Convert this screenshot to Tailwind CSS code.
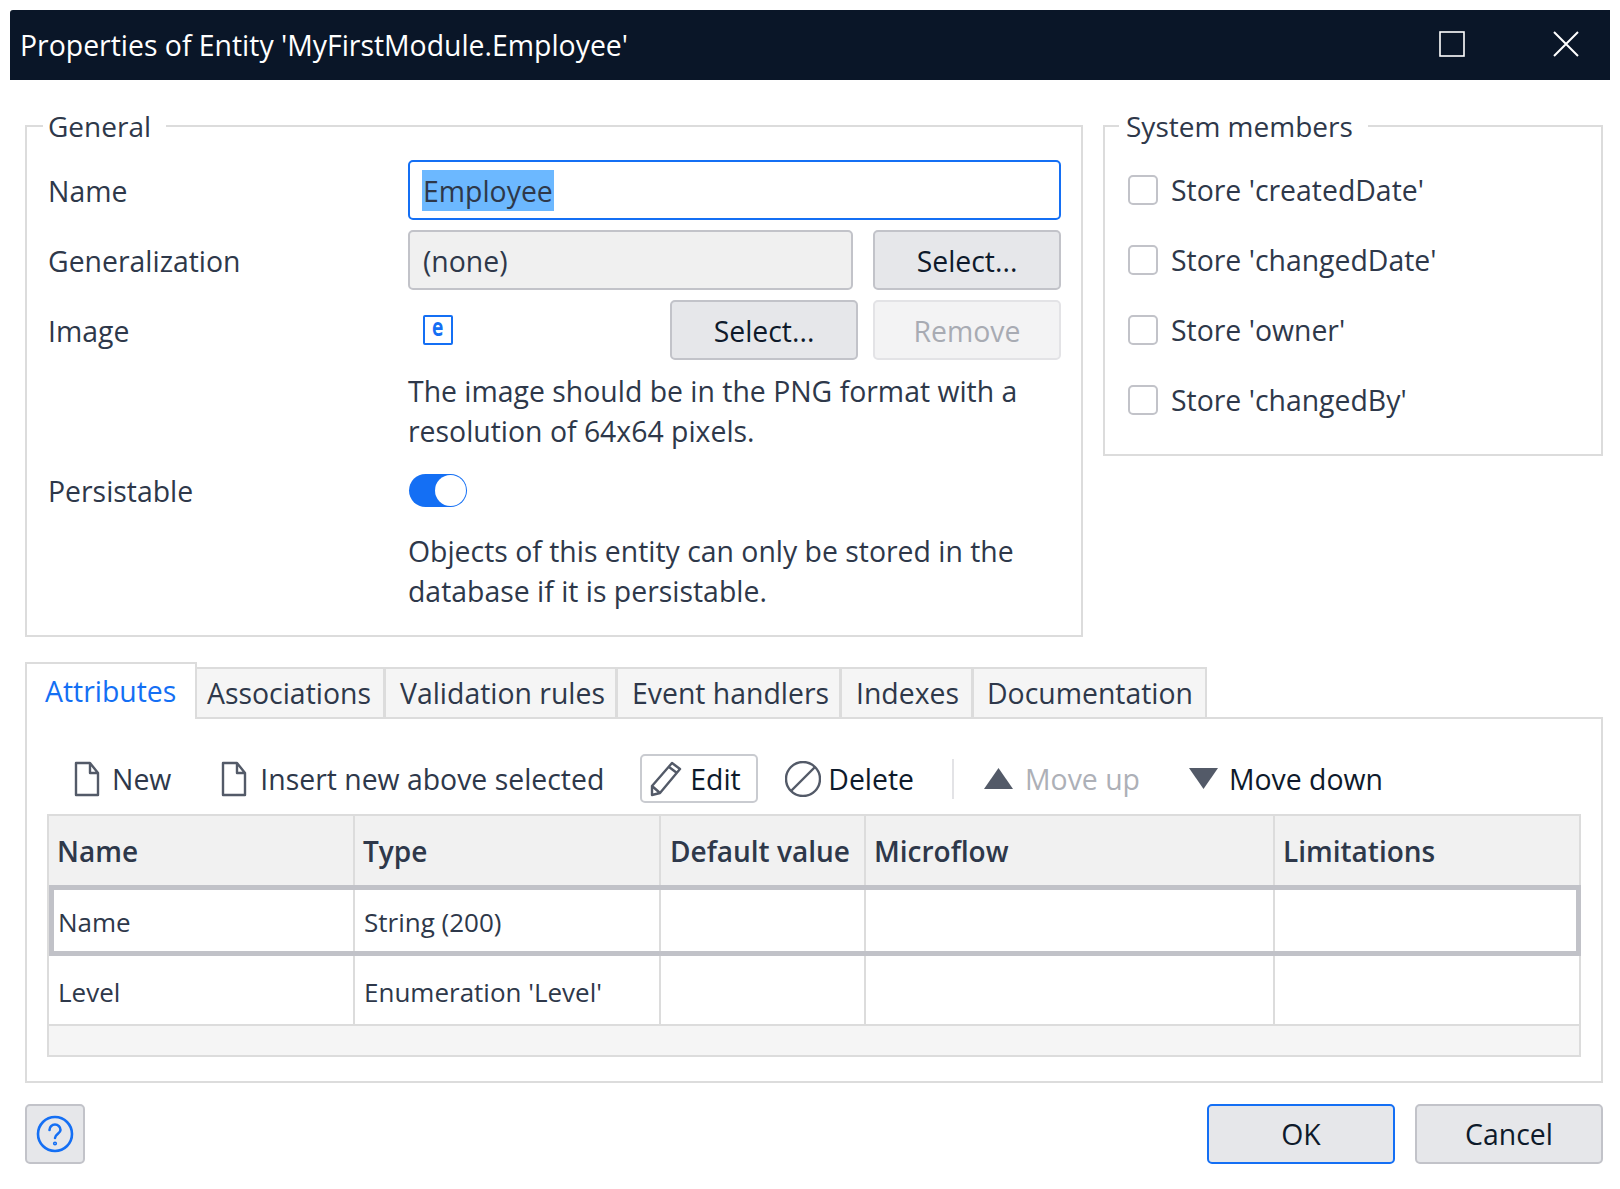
<!DOCTYPE html>
<html lang="en">
<head>
  <meta charset="UTF-8" />
  <title>Properties of Entity</title>
  <script src="https://cdn.jsdelivr.net/npm/@tailwindcss/browser@4"></script>
</head>
<body class="bg-white pt-[10px] px-[10px] font-['Open_Sans',sans-serif] text-[28.4px] leading-[40px] text-[#2e384a] whitespace-nowrap overflow-hidden">

  <!-- Title bar -->
  <div class="h-[70px] bg-[#0a1628] text-white flex items-center pl-[10px] rounded-tl-[3px]">
    <span class="flex-1">Properties of Entity 'MyFirstModule.Employee'</span>
    <svg class="w-[26px] h-[26px] mr-[88px] -mt-[2px]" viewBox="0 0 26 26" fill="none" stroke="white" stroke-width="1.6"><rect x="1" y="1" width="24" height="24" /></svg>
    <svg class="w-[26px] h-[26px] mr-[31px] -mt-[2px]" viewBox="0 0 26 26" fill="none" stroke="white" stroke-width="2"><path d="M1 1l24 24M25 1L1 25" /></svg>
  </div>

  <div class="pl-[15px] pr-[7px]">
    <!-- Top fieldsets -->
    <div class="flex items-start gap-[20px] mt-[28px]">
      <fieldset class="w-[1058px] border-2 border-[#dcdcdc] pl-[21px] pr-[20px] pb-[24px]">
        <legend class="-ml-[5px] pl-[5px] pr-[15px] h-[36px] leading-[36px] text-[28px]">General</legend>
        <div class="mt-[16px] flex flex-col gap-[10px]">
          <div class="flex items-center h-[60px]">
            <span class="w-[360px] pt-[2px]">Name</span>
            <div class="flex-1 h-[60px] border-2 border-[#146ff4] rounded-[5px] pl-[12px] flex items-center">
              <span class="bg-[#6cb8ff] h-[41px] leading-[43px] px-[1px]">Employee</span>
            </div>
          </div>
          <div class="flex items-center h-[60px]">
            <span class="w-[360px] pt-[2px]">Generalization</span>
            <div class="flex-1 h-[60px] bg-[#f0f0f0] border-2 border-[#c2c3c9] rounded-[5px] pl-[13px] pt-[2px] flex items-center">(none)</div>
            <button class="ml-[20px] w-[188px] h-[60px] bg-[#e6e7ea] border-2 border-[#c2c3c9] rounded-[5px] pt-[2px] text-[#0e1a2b]">Select...</button>
          </div>
          <div class="flex items-center h-[60px]">
            <span class="w-[360px] pt-[2px]">Image</span>
            <span class="ml-[15px] w-[30px] h-[30px] border-2 border-[#146ff4] rounded-[2px] flex items-center justify-center text-[#146ff4] font-['DejaVu_Sans_Mono',monospace] font-bold text-[25px] leading-none pb-[5px]"><span class="scale-x-[.75]">e</span></span>
            <button class="ml-auto w-[188px] h-[60px] bg-[#e6e7ea] border-2 border-[#c2c3c9] rounded-[5px] pt-[2px] text-[#0e1a2b]">Select...</button>
            <button class="ml-[15px] w-[188px] h-[60px] bg-[#f3f3f4] border-2 border-[#e3e3e6] rounded-[5px] pt-[2px] text-[#a8abb3]">Remove</button>
          </div>
        </div>
        <p class="ml-[360px] mt-[12px] leading-[39.5px]">The image should be in the PNG format with a<br />resolution of 64x64 pixels.</p>
        <div class="flex items-center mt-[23px] h-[33px]">
          <span class="w-[360px]">Persistable</span>
          <span class="ml-[1px] w-[58px] h-[33px] rounded-full bg-[#146ff4] flex justify-end p-[1px]">
            <span class="w-[31px] h-[31px] rounded-full bg-white"></span>
          </span>
        </div>
        <p class="ml-[360px] mt-[25px] leading-[39.5px]">Objects of this entity can only be stored in the<br />database if it is persistable.</p>
      </fieldset>

      <fieldset class="w-[500px] border-2 border-[#dcdcdc] pl-[23px] pb-[25px]">
        <legend class="-ml-[9px] pl-[7px] pr-[15px] h-[36px] leading-[36px] text-[28px]">System members</legend>
        <div class="mt-[16px] flex flex-col gap-[11px]">
          <label class="flex items-center h-[59px]"><span class="w-[30px] h-[30px] border-2 border-[#c2c3c9] rounded-[5px] mr-[13px]"></span>Store 'createdDate'</label>
          <label class="flex items-center h-[59px]"><span class="w-[30px] h-[30px] border-2 border-[#c2c3c9] rounded-[5px] mr-[13px]"></span>Store 'changedDate'</label>
          <label class="flex items-center h-[59px]"><span class="w-[30px] h-[30px] border-2 border-[#c2c3c9] rounded-[5px] mr-[13px]"></span>Store 'owner'</label>
          <label class="flex items-center h-[59px]"><span class="w-[30px] h-[30px] border-2 border-[#c2c3c9] rounded-[5px] mr-[13px]"></span>Store 'changedBy'</label>
        </div>
      </fieldset>
    </div>

    <!-- Tabs -->
    <div class="flex items-end mt-[25px] h-[57px] relative z-10 -mb-[2px]">
      <div class="w-[172px] h-[57px] bg-white border-2 border-b-0 border-[#dcdcdc] pl-[18px] pt-[7px] text-[#146ff4]">Attributes</div>
      <div class="w-[189px] h-[52px] bg-[#f5f5f5] border-2 border-l-0 border-r-[3px] border-[#dcdcdc] pl-[10px] pt-[4px]">Associations</div>
      <div class="w-[232px] h-[52px] bg-[#f5f5f5] border-2 border-l-0 border-r-[3px] border-[#dcdcdc] pl-[14px] pt-[4px]">Validation rules</div>
      <div class="w-[224px] h-[52px] bg-[#f5f5f5] border-2 border-l-0 border-r-[3px] border-[#dcdcdc] pl-[14px] pt-[4px]">Event handlers</div>
      <div class="w-[132px] h-[52px] bg-[#f5f5f5] border-2 border-l-0 border-r-[3px] border-[#dcdcdc] pl-[14px] pt-[4px]">Indexes</div>
      <div class="w-[233px] h-[52px] bg-[#f5f5f5] border-2 border-l-0 border-[#dcdcdc] pl-[13px] pt-[4px]">Documentation</div>
    </div>

    <!-- Attributes panel -->
    <div class="border-2 border-[#dcdcdc] px-[20px] pt-[35px] pb-[24px]">
      <div class="flex items-center h-[49px] mb-[11px]">
        <svg class="ml-[27px] w-[26px] h-[36px]" viewBox="0 0 26 36" fill="none" stroke="#535a68" stroke-width="2.400" stroke-linejoin="round"><path d="M2 2h14l8 10v22H2zM16 2v10h8" /></svg>
        <span class="ml-[12px]">New</span>
        <svg class="ml-[50px] w-[26px] h-[36px]" viewBox="0 0 26 36" fill="none" stroke="#535a68" stroke-width="2.400" stroke-linejoin="round"><path d="M2 2h14l8 10v22H2zM16 2v10h8" /></svg>
        <span class="ml-[13px]">Insert new above selected</span>
        <button class="ml-[36px] w-[118px] h-[49px] border-2 border-[#c9cbd0] rounded-[5px] flex items-center pl-[8px] text-[#0e1a2b]">
          <svg class="w-[32px] h-[36px] shrink-0" viewBox="0 0 32 36" fill="none" stroke="#535a68" stroke-width="2.400" stroke-linejoin="round"><path d="M2 34v-9L22 2l8 6-20 24zM2 25l8 7M19 6l8 6" /></svg>
          <span class="ml-[8px]">Edit</span>
        </button>
        <svg class="ml-[27px] w-[36px] h-[36px]" viewBox="0 0 36 36" fill="none" stroke="#535a68" stroke-width="2.400"><circle cx="18" cy="18" r="17" /><path d="M6 30L30 6" /></svg>
        <span class="ml-[7px] text-[#0e1a2b]">Delete</span>
        <span class="ml-[38px] w-[2px] h-[40px] bg-[#e3e3e6]"></span>
        <svg class="ml-[30px] w-[29px] h-[21px]" viewBox="0 0 29 21" fill="#535a68"><path d="M14.5 0L29 21H0z" /></svg>
        <span class="ml-[12px] text-[#adb0b7]">Move up</span>
        <svg class="ml-[49px] w-[29px] h-[21px]" viewBox="0 0 29 21" fill="#535a68"><path d="M0 0h29L14.5 21z" /></svg>
        <span class="ml-[11px] text-[#0e1a2b]">Move down</span>
      </div>

      <!-- Attribute grid -->
      <div class="border-2 border-[#dcdcdc]">
        <div class="grid grid-cols-[306px_306px_205px_409px_1fr] h-[69px] bg-[#f1f1f1] font-semibold text-[28px]">
          <div class="border-r-2 border-[#dcdcdc] pl-[8px] flex items-center">Name</div>
          <div class="border-r-2 border-[#dcdcdc] pl-[8px] flex items-center">Type</div>
          <div class="border-r-2 border-[#dcdcdc] pl-[9px] flex items-center">Default value</div>
          <div class="border-r-2 border-[#dcdcdc] pl-[8px] flex items-center">Microflow</div>
          <div class="pl-[8px] flex items-center">Limitations</div>
        </div>
        <div class="grid grid-cols-[301px_306px_205px_409px_1fr] h-[71px] border-[5px] border-[#c1c2c8] -mr-[2px] text-[26px]">
          <div class="border-r-2 border-[#dcdcdc] pl-[4px] pt-[2px] flex items-center">Name</div>
          <div class="border-r-2 border-[#dcdcdc] pl-[9px] pt-[2px] flex items-center">String (200)</div>
          <div class="border-r-2 border-[#dcdcdc]"></div>
          <div class="border-r-2 border-[#dcdcdc]"></div>
          <div></div>
        </div>
        <div class="grid grid-cols-[306px_306px_205px_409px_1fr] h-[70px] border-b-2 border-[#dcdcdc] text-[26px]">
          <div class="border-r-2 border-[#dcdcdc] pl-[9px] pt-[4px] flex items-center">Level</div>
          <div class="border-r-2 border-[#dcdcdc] pl-[9px] pt-[4px] flex items-center">Enumeration 'Level'</div>
          <div class="border-r-2 border-[#dcdcdc]"></div>
          <div class="border-r-2 border-[#dcdcdc]"></div>
          <div></div>
        </div>
        <div class="h-[29px] bg-[#f5f5f5]"></div>
      </div>
    </div>

    <!-- Footer -->
    <div class="flex items-center mt-[21px]">
      <button class="w-[60px] h-[60px] bg-[#e6e7ea] border-2 border-[#c2c3c9] rounded-[5px] flex items-center justify-center">
        <svg class="w-[38px] h-[38px]" viewBox="0 0 38 38" fill="none" stroke="#146ff4" stroke-width="2.6" stroke-linecap="round"><circle cx="19" cy="19" r="17" /><path d="M13.500 15a5.500 5.500 0 0 1 11 0c0 3.500-5.500 4-5.500 8" /><circle cx="19" cy="28.500" r="0.8" /></svg>
      </button>
      <button class="ml-auto w-[188px] h-[60px] bg-[#e6e7ea] border-2 border-[#146ff4] rounded-[5px] text-[#0e1a2b]">OK</button>
      <button class="ml-[20px] w-[188px] h-[60px] bg-[#e6e7ea] border-2 border-[#c2c3c9] rounded-[5px] text-[#0e1a2b]">Cancel</button>
    </div>
  </div>
</body>
</html>
